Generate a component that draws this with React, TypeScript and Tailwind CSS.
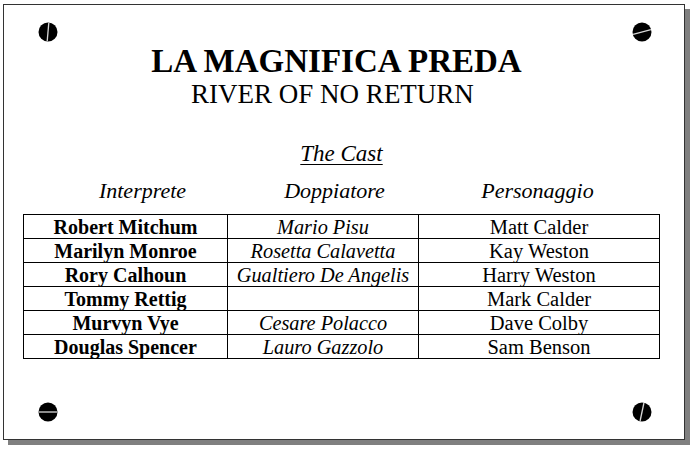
import React from 'react';

const serif = "font-['Liberation_Serif','Times_New_Roman',serif]";

const cast = [
  { actor: 'Robert Mitchum', voice: 'Mario Pisu', role: 'Matt Calder' },
  { actor: 'Marilyn Monroe', voice: 'Rosetta Calavetta', role: 'Kay Weston' },
  { actor: 'Rory Calhoun', voice: 'Gualtiero De Angelis', role: 'Harry Weston' },
  { actor: 'Tommy Rettig', voice: '', role: 'Mark Calder' },
  { actor: 'Murvyn Vye', voice: 'Cesare Polacco', role: 'Dave Colby' },
  { actor: 'Douglas Spencer', voice: 'Lauro Gazzolo', role: 'Sam Benson' },
];

function Screw({ angle, className }: { angle: number; className: string }) {
  return (
    <svg width="20" height="20" viewBox="0 0 20 20" className={`absolute ${className}`}>
      <circle cx="10" cy="10" r="9.5" fill="#000" />
      <line x1="10" y1="0.8" x2="10" y2="19.2" stroke="#d8d8d8" strokeWidth="1.3" transform={`rotate(${angle} 10 10)`} />
    </svg>
  );
}

export default function App() {
  return (
    <div className={`w-[693px] h-[449px] bg-white pl-[3px] pt-[4px] text-black ${serif}`}>
      <div className="relative w-[682px] h-[436px] border border-[#333] bg-white shadow-[5px_5px_0_#808080] flex flex-col items-center">
        {/* viti */}
        <Screw angle={5} className="left-[34px] top-[17px]" />
        <Screw angle={75} className="left-[628px] top-[17px]" />
        <Screw angle={90} className="left-[34px] top-[397px]" />
        <Screw angle={12} className="left-[628px] top-[397px]" />

        <h1 className="mt-[40px] text-[33px] leading-[33px] font-bold pr-[15px]">LA MAGNIFICA PREDA</h1>
        <h2 className="mt-[3px] text-[27px] leading-[27px] pr-[23px]">RIVER OF NO RETURN</h2>
        <p className="mt-[34px] text-[23px] leading-[23px] italic underline underline-offset-[3px] decoration-1 pr-[5px]">The Cast</p>

        <div className="mt-[15px] self-start ml-[39px] flex text-[22px] leading-[22px] italic">
          <div className="w-[199px] text-center">Interprete</div>
          <div className="w-[185px] text-center">Doppiatore</div>
          <div className="w-[221px] text-center">Personaggio</div>
        </div>

        <table className="mt-[12px] self-start ml-[19px] border-collapse leading-[20px]">
          <tbody>
            {cast.map((c) => (
              <tr key={c.actor} className="h-[24px]">
                <td className="w-[204px] border border-black p-0 text-center text-[20px] font-bold">{c.actor}</td>
                <td className="w-[191px] border border-black p-0 text-center text-[20.3px] italic">{c.voice}</td>
                <td className="w-[241px] border border-black p-0 text-center text-[20.5px]">{c.role}</td>
              </tr>
            ))}
          </tbody>
        </table>
      </div>
    </div>
  );
}
